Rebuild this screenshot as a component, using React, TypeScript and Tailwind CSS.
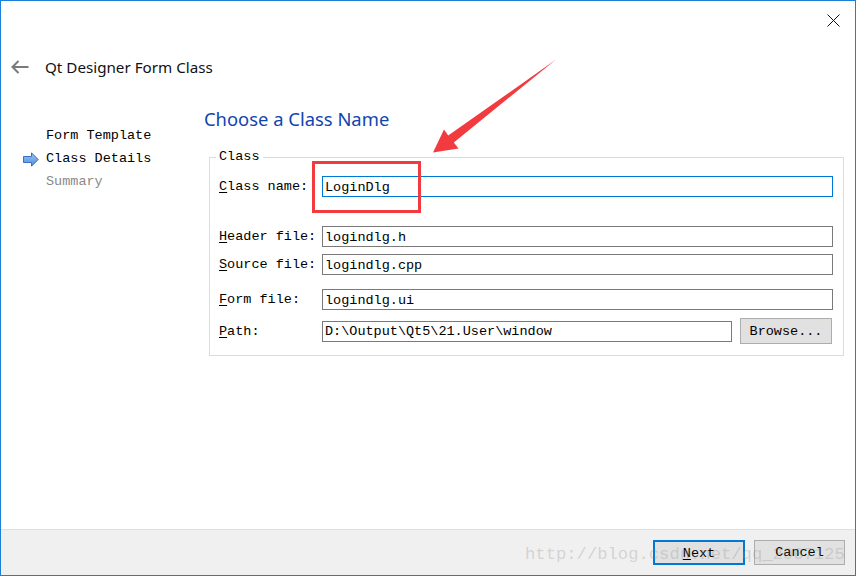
const mono = { fontFamily: '"Liberation Mono", "DejaVu Sans Mono", monospace' };

const Field = ({
  label,
  mnemonic,
  value,
  active,
  className,
}: {
  label: string;
  mnemonic: string;
  value: string;
  active?: boolean;
  className?: string;
}) => (
  <div className={`flex items-center h-[21px] ${className ?? ""}`}>
    <span className="w-[103px] shrink-0 pt-[2px] text-black">
      <span className="underline underline-offset-2">{mnemonic}</span>
      {label}
    </span>
    <input
      readOnly
      value={value}
      className={`w-[511px] h-[21px] px-[2px] pt-[1px] bg-white outline-none text-black border ${
        active ? "border-[#0078d7]" : "border-[#7a7a7a]"
      }`}
    />
  </div>
);

const NavItem = ({ text, current, muted }: { text: string; current?: boolean; muted?: boolean }) => (
  <div className="flex items-center h-[23px] pl-[22px]">
    <div className="w-[23px] shrink-0 flex items-center">
      {current && (
        <svg width="16" height="15" viewBox="0 0 16 15">
          <defs>
            <linearGradient id="navArrow" x1="0" y1="0" x2="0" y2="1">
              <stop offset="0" stopColor="#9cc4f2" />
              <stop offset="1" stopColor="#4f8ddc" />
            </linearGradient>
          </defs>
          <polygon
            points="0.5,4.5 8.5,4.5 8.5,0.8 15.2,7.5 8.5,14.2 8.5,10.5 0.5,10.5"
            fill="url(#navArrow)"
            stroke="#3a6fc4"
            strokeWidth="1"
          />
        </svg>
      )}
    </div>
    <span className={muted ? "text-[#8a8a8a]" : "text-black"}>{text}</span>
  </div>
);

export default function App() {
  return (
    <div className="relative w-[856px] h-[576px] border border-[#1a7fd8] bg-white flex flex-col overflow-hidden">
      {/* title bar */}
      <div className="h-[38px] flex justify-end items-center pr-[15px]">
        <svg width="13" height="13" viewBox="0 0 13 13">
          <path d="M0.5 0.5 L12.5 12.5 M12.5 0.5 L0.5 12.5" stroke="#111" strokeWidth="1" />
        </svg>
      </div>

      {/* wizard header */}
      <div className="h-[56px] flex items-center">
        <svg className="ml-[10px]" width="18" height="14" viewBox="0 0 18 14">
          <path d="M1.5 7 H17.5 M7.5 1 L1.5 7 L7.5 13" stroke="#7a7a7a" strokeWidth="2" fill="none" />
        </svg>
        <span
          className="ml-[16px] text-[15.2px] text-[#111]"
          style={{ fontFamily: '"Noto Sans", "Open Sans", sans-serif' }}
        >
          Qt Designer Form Class
        </span>
      </div>

      {/* body */}
      <div className="flex-1 flex text-[13.5px]" style={mono}>
        <div className="w-[203px] pt-[30px]">
          <NavItem text="Form Template" />
          <NavItem text="Class Details" current />
          <NavItem text="Summary" muted />
        </div>

        <div className="pt-[12px]">
          <h1
            className="text-[18.4px] leading-[24px] text-[#1244b0]"
            style={{ fontFamily: '"Noto Sans", "Open Sans", sans-serif' }}
          >
            Choose a Class Name
          </h1>

          <fieldset className="ml-[5px] mt-[18px] w-[635px] border border-[#dcdcdc] pl-[9px] pr-[10px] pb-[11px]">
            <legend className="-ml-[3px] px-[3px] leading-[16px] text-black">Class</legend>

            <Field className="mt-[11px]" mnemonic="C" label="lass name:" value="LoginDlg" active />
            <Field className="mt-[29px]" mnemonic="H" label="eader file:" value="logindlg.h" />
            <Field className="mt-[7px]" mnemonic="S" label="ource file:" value="logindlg.cpp" />
            <Field className="mt-[14px]" mnemonic="F" label="orm file:" value="logindlg.ui" />

            <div className="mt-[8px] flex items-center h-[26px]">
              <span className="w-[103px] shrink-0 pt-[2px] text-black">
                <span className="underline underline-offset-2">P</span>ath:
              </span>
              <input
                readOnly
                value={"D:\\Output\\Qt5\\21.User\\window"}
                className="w-[410px] h-[21px] px-[2px] pt-[1px] bg-white outline-none text-black border border-[#7a7a7a]"
              />
              <button className="ml-[8px] w-[92px] h-[26px] pt-[2px] bg-[#e1e1e1] border border-[#adadad] text-black">
                Browse...
              </button>
            </div>
          </fieldset>
        </div>
      </div>

      {/* footer */}
      <div
        className="h-[46px] shrink-0 border-t border-[#dfdfdf] bg-[#f0f0f0] flex justify-end items-center gap-[9px] pr-[10px] text-[13.5px]"
        style={mono}
      >
        <button className="w-[92px] h-[25px] pt-[2px] bg-[#e1e1e1] border-2 border-[#0078d7] text-black">
          <span className="underline underline-offset-2">N</span>ext
        </button>
        <button className="w-[91px] h-[25px] pt-[2px] bg-[#e1e1e1] border border-[#adadad] text-black">
          Cancel
        </button>
      </div>

      {/* annotation: red box */}
      <div className="absolute left-[311px] top-[160px] w-[109px] h-[52px] border-[3px] border-[#f23b3f] pointer-events-none" />

      {/* annotation: red arrow */}
      <svg className="absolute left-0 top-0 pointer-events-none" width="856" height="576">
        <polygon
          points="555,58.5 452.8,141.4 457.5,147.5 432,151.5 443,128.5 447.2,134.6"
          fill="#f23b3f"
        />
      </svg>

      {/* watermark */}
      <div
        className="absolute left-[524px] top-[542px] text-[17.2px] leading-[24px] text-[rgba(140,140,140,0.3)] pointer-events-none whitespace-nowrap"
        style={mono}
      >
        http://blog.csdn.net/qq_2067125
      </div>
    </div>
  );
}
